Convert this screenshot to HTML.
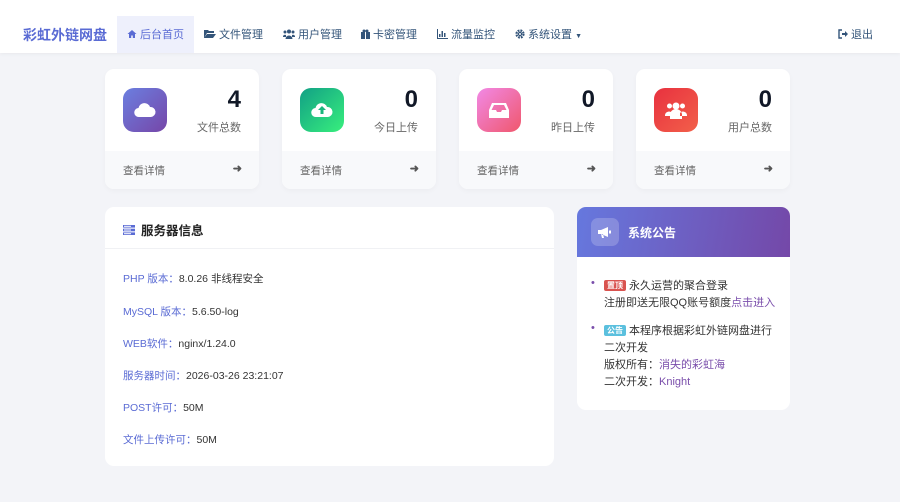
<!DOCTYPE html>
<html><head><meta charset="utf-8"><style>
*{box-sizing:border-box;margin:0;padding:0}
body{width:900px;height:502px;background:#f3f4f8;font-family:"Liberation Sans","Noto Sans CJK SC",sans-serif;position:relative;overflow:hidden;color:#333}
.nav{position:absolute;left:0;top:0;width:900px;height:53px;background:#fff;box-shadow:0 1px 4px rgba(0,0,0,.05)}
.brand{position:absolute;left:23px;top:25px;font-size:14px;font-weight:bold;color:#5a6bd4;line-height:20px}
.ni{position:absolute;top:16px;height:37px;line-height:38px;font-size:11px;color:#34557a}
.ni svg{vertical-align:-1px;margin-right:3px}
.act{background:#eef0fc;color:#5a6bd4;padding:0 10px}
.card{position:absolute;top:69px;width:154px;height:120px;background:#fff;border-radius:9px;overflow:hidden;box-shadow:0 2px 6px rgba(0,0,0,.03)}
.ic{position:absolute;left:18px;top:19px;width:44px;height:44px;border-radius:11px;display:flex;align-items:center;justify-content:center}
.num{position:absolute;right:18px;top:17px;font-size:24px;font-weight:bold;color:#111827}
.lb{position:absolute;right:18px;top:50px;font-size:11px;color:#666}
.ft{position:absolute;left:0;top:82px;width:100%;height:38px;background:#f8f9fb;font-size:10.5px;color:#666;padding:12px 0 0 18px}
.ft span{position:absolute;right:17px;top:11px;color:#555;font-weight:bold;font-size:11px}
.panel{position:absolute;background:#fff;border-radius:9px;overflow:hidden}
.row{position:absolute;left:18px;font-size:10.5px;color:#333}
.row b{font-weight:normal;color:#5a6bd4}
.nt{font-size:11px;line-height:17px;color:#333}
.tag{display:inline-block;font-size:8px;color:#fff;padding:0 3px;line-height:11px;border-radius:2px;vertical-align:1px;font-weight:bold}
a{color:#7a4eab;text-decoration:none}
</style></head><body>
<div class="nav">
<div class="brand">彩虹外链网盘</div>
<div class="ni act" style="left:117px"><svg width="10" height="10" viewBox="0 0 10 10"><path d="M5 1L0.5 5H2v4h2.2V6.5h1.6V9H8V5h1.5z" fill="#5a6bd4"/></svg>后台首页</div>
<div class="ni" style="left:204px"><svg width="12" height="10" viewBox="0 0 12 10"><path d="M0 1h4l1 1h5v2H3L0 9z M3 5h9l-3 4H0z" fill="#34557a"/></svg>文件管理</div>
<div class="ni" style="left:283px"><svg width="12" height="10" viewBox="0 0 12 10"><circle cx="6" cy="2.5" r="2" fill="#34557a"/><circle cx="2" cy="3" r="1.5" fill="#34557a"/><circle cx="10" cy="3" r="1.5" fill="#34557a"/><path d="M2.5 10a3.5 3.5 0 017 0zM0 8a2 2 0 013-2v2zM12 8a2 2 0 00-3-2v2z" fill="#34557a"/></svg>用户管理</div>
<div class="ni" style="left:361px"><svg width="9" height="10" viewBox="0 0 9 10"><rect x="0" y="3" width="9" height="7" fill="#34557a"/><rect x="4" y="3" width="1" height="7" fill="#fff"/><circle cx="3" cy="2" r="1.5" fill="#34557a"/><circle cx="6" cy="2" r="1.5" fill="#34557a"/></svg>卡密管理</div>
<div class="ni" style="left:437px"><svg width="11" height="10" viewBox="0 0 11 10"><path d="M0 0h1v9h10v1H0z M2 5h1.5v3H2z M4.5 2h1.5v6H4.5z M7 4h1.5v4H7z" fill="#34557a"/></svg>流量监控</div>
<div class="ni" style="left:515px"><svg width="10" height="10" viewBox="0 0 10 10"><circle cx="5" cy="5" r="3.5" fill="none" stroke="#34557a" stroke-width="2.2" stroke-dasharray="1.8 1"/><circle cx="5" cy="5" r="2.2" fill="#34557a"/><circle cx="5" cy="5" r="1" fill="#fff"/></svg>系统设置 <span style="font-size:7px">▼</span></div>
<div class="ni" style="left:838px"><svg width="10" height="10" viewBox="0 0 10 10"><path d="M4 1H1v8h3" fill="none" stroke="#34557a" stroke-width="1.4"/><path d="M4 4h3V2l3 3-3 3V6H4z" fill="#34557a"/></svg>退出</div>
</div>

<div class="card" style="left:105px"><div class="ic" style="background:linear-gradient(135deg,#6b7fe0,#7646a8)"><svg width="22" height="16" viewBox="0 0 22 16"><path d="M5 15a4.5 4.5 0 01-.5-9A6 6 0 0116 5a5 5 0 011 10z" fill="#fff"/></svg></div><div class="num">4</div><div class="lb">文件总数</div><div class="ft">查看详情<span>➜</span></div></div>
<div class="card" style="left:282px"><div class="ic" style="background:linear-gradient(135deg,#11a085,#38ef7d)"><svg width="22" height="16" viewBox="0 0 22 16"><path d="M5 15a4.5 4.5 0 01-.5-9A6 6 0 0116 5a5 5 0 011 10z" fill="#fff"/><path d="M11 4l4 4h-2.5v4h-3V8H7z" fill="#1bb57c"/></svg></div><div class="num">0</div><div class="lb">今日上传</div><div class="ft">查看详情<span>➜</span></div></div>
<div class="card" style="left:459px"><div class="ic" style="background:linear-gradient(135deg,#f189e6,#f0576c)"><svg width="20" height="15" viewBox="0 0 20 15"><path d="M3 0h14l3 7v8H0V7z M2.5 7h4.5l1 2h4l1-2h4.5L15 2H5z" fill="#fff" fill-rule="evenodd"/></svg></div><div class="num">0</div><div class="lb">昨日上传</div><div class="ft">查看详情<span>➜</span></div></div>
<div class="card" style="left:636px"><div class="ic" style="background:linear-gradient(135deg,#e8313f,#f2604a)"><svg width="22" height="18" viewBox="0 0 22 18"><circle cx="11" cy="5" r="3.5" fill="#fff"/><circle cx="4.5" cy="5" r="2.5" fill="#fff"/><circle cx="17.5" cy="5" r="2.5" fill="#fff"/><path d="M5 18v-4a6 6 0 0112 0v4zM0 14a4 4 0 017-2v3H0zM22 14a4 4 0 00-7-2v3h7z" fill="#fff"/></svg></div><div class="num">0</div><div class="lb">用户总数</div><div class="ft">查看详情<span>➜</span></div></div>

<div class="panel" style="left:105px;top:207px;width:449px;height:259px">
<div style="height:42px;border-bottom:1px solid #f0f1f4;padding:13px 0 0 18px;font-size:12.5px;font-weight:bold;color:#222"><svg width="12" height="10" viewBox="0 0 12 10" style="vertical-align:0;margin-right:6px"><rect y="0" width="12" height="2.6" fill="#5a6bd4"/><rect y="3.7" width="12" height="2.6" fill="#5a6bd4"/><rect y="7.4" width="12" height="2.6" fill="#5a6bd4"/><rect x="1" y=".8" width="7" height="1" fill="#fff"/><rect x="1" y="4.5" width="7" height="1" fill="#fff"/><rect x="1" y="8.2" width="7" height="1" fill="#fff"/></svg>服务器信息</div>
<div class="row" style="top:64px"><b>PHP 版本：</b>8.0.26 非线程安全</div>
<div class="row" style="top:97px"><b>MySQL 版本：</b>5.6.50-log</div>
<div class="row" style="top:129px"><b>WEB软件：</b>nginx/1.24.0</div>
<div class="row" style="top:161px"><b>服务器时间：</b>2026-03-26 23:21:07</div>
<div class="row" style="top:193px"><b>POST许可：</b>50M</div>
<div class="row" style="top:225px"><b>文件上传许可：</b>50M</div>
</div>

<div class="panel" style="left:577px;top:207px;width:213px;height:203px">
<div style="height:50px;background:linear-gradient(100deg,#6678de,#7448a8);position:relative">
<div style="position:absolute;left:14px;top:11px;width:28px;height:28px;border-radius:7px;background:rgba(255,255,255,.2);display:flex;align-items:center;justify-content:center"><svg width="14" height="11" viewBox="0 0 14 11"><path d="M0 3h3l7-3v10L3 7H0z M3 7l1 4h2l-1-4z M11 3.5h2v3h-2z" fill="#fff"/></svg></div>
<div style="position:absolute;left:51px;top:17px;color:#fff;font-size:12px;font-weight:bold">系统公告</div></div>
<div class="nt" style="position:absolute;left:27px;top:71px;width:184px"><span style="position:absolute;left:-13px;top:-3px;color:#7a4eab;font-size:11px">•</span><span class="tag" style="background:#d9534f">置顶</span> 永久运营的聚合登录<br>注册即送无限QQ账号额度<a>点击进入</a></div>
<div class="nt" style="position:absolute;left:27px;top:116px;width:184px"><span style="position:absolute;left:-13px;top:-3px;color:#7a4eab;font-size:11px">•</span><span class="tag" style="background:#5bc0de">公告</span> 本程序根据彩虹外链网盘进行<br>二次开发<br>版权所有：<a>消失的彩虹海</a><br>二次开发：<a>Knight</a></div>
</div>
</body></html>
